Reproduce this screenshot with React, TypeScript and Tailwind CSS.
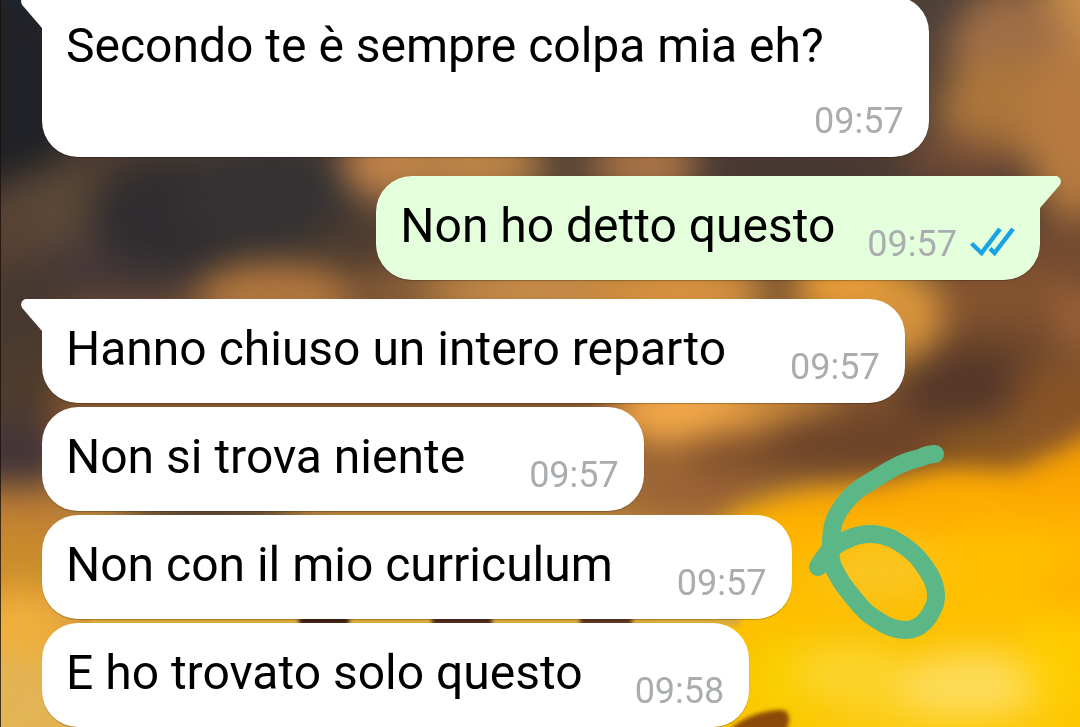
import clsx from "clsx";

type Message = {
  text: string;
  time: string;
  own?: boolean;
  tail?: boolean;
  stacked?: boolean;
  textGap: string;
};

const groups: Message[][] = [
  [
    {
      text: "Secondo te è sempre colpa mia eh?",
      time: "09:57",
      tail: true,
      stacked: true,
      textGap: "pr-20",
    },
  ],
  [{ text: "Non ho detto questo", time: "09:57", own: true, tail: true, textGap: "pr-8" }],
  [
    { text: "Hanno chiuso un intero reparto", time: "09:57", tail: true, textGap: "pr-16" },
    { text: "Non si trova niente", time: "09:57", textGap: "pr-16" },
    { text: "Non con il mio curriculum", time: "09:57", textGap: "pr-16" },
    { text: "E ho trovato solo questo", time: "09:58", textGap: "pr-[52px]" },
  ],
];

/* cx, cy, rx, ry, colour, opacity */
type Blob = [number, number, number, number, string, number];

const softBlobs: Blob[] = [
  [0, 10, 60, 60, "#1d2a36", 1],
  [0, 90, 80, 100, "#202126", 1],
  [60, 212, 70, 45, "#5a4736", 1],
  [0, 245, 30, 50, "#5a4134", 0.8],
  [120, 270, 90, 30, "#41363a", 0.9],
  [180, 215, 90, 55, "#2f2d2f", 1],
  [270, 200, 90, 55, "#343233", 1],
  [350, 240, 40, 30, "#4b3b30", 0.8],
  [385, 165, 44, 36, "#bd8049", 1],
  [470, 166, 80, 26, "#c98d49", 1],
  [580, 166, 40, 18, "#5f4938", 1],
  [650, 166, 60, 22, "#bd7f4b", 1],
  [790, 168, 100, 24, "#483833", 1],
  [275, 296, 80, 30, "#b3783f", 1],
  [410, 290, 50, 20, "#8a6038", 1],
  [560, 290, 140, 26, "#d0924a", 1],
  [680, 292, 90, 30, "#dd9640", 1],
  [850, 288, 60, 34, "#e89c38", 1],
  [935, 20, 40, 80, "#4c3f38", 1],
  [935, 90, 26, 60, "#594437", 0.9],
  [1080, 25, 50, 60, "#c68e4a", 1],
  [1010, 50, 60, 60, "#a06e46", 1],
  [1000, 110, 60, 50, "#ac763b", 1],
  [960, 158, 60, 26, "#7d5038", 0.7],
  [1075, 130, 50, 90, "#b67a3f", 1],
  [1075, 255, 55, 36, "#744b31", 1],
  [1000, 305, 90, 40, "#85542f", 1],
  [912, 325, 30, 55, "#d8953b", 1],
  [1010, 350, 80, 30, "#70482c", 0.9],
  [965, 385, 70, 38, "#553829", 1],
  [1080, 320, 26, 36, "#a5663a", 0.7],
  [1060, 400, 50, 36, "#885326", 0.9],
  [690, 412, 80, 34, "#f4a848", 1],
  [790, 412, 60, 24, "#e29b40", 1],
  [760, 452, 80, 22, "#7c4d2a", 1],
  [860, 440, 100, 34, "#6d4429", 1],
  [690, 492, 70, 24, "#9b6236", 1],
  [985, 452, 60, 28, "#8c591f", 0.8],
  [20, 330, 50, 70, "#45382f", 1],
  [15, 385, 45, 50, "#4d3b2d", 1],
  [15, 455, 50, 34, "#42343a", 1],
  [10, 510, 60, 24, "#bd7c34", 1],
  [15, 565, 55, 40, "#ca8b2b", 1],
  [20, 630, 50, 44, "#f0ae3c", 1],
  [15, 705, 70, 50, "#e2b455", 1],
  [210, 513, 90, 16, "#332a2e", 1],
];

const glowBlobs: Blob[] = [
  [1000, 575, 90, 50, "#ffc000", 0.7],
  [880, 570, 60, 30, "#fac726", 0.9],
  [1070, 590, 30, 20, "#ffaa00", 0.7],
  [960, 500, 60, 18, "#ffad00", 0.8],
  [785, 680, 34, 40, "#f8d000", 0.9],
  [850, 672, 55, 28, "#fad530", 1],
  [910, 705, 80, 24, "#fbd022", 0.9],
  [975, 685, 80, 34, "#fddb58", 1],
  [1060, 660, 40, 50, "#ffce00", 0.8],
];

function Wallpaper() {
  return (
    <svg
      aria-hidden="true"
      className="absolute inset-0 h-full w-full"
      viewBox="0 0 1080 727"
      preserveAspectRatio="none"
    >
      <defs>
        <linearGradient id="sky" x1="0" y1="0" x2="0" y2="1">
          <stop offset="0" stopColor="#5a4535" />
          <stop offset="0.25" stopColor="#4a3a31" />
          <stop offset="0.5" stopColor="#81542e" />
          <stop offset="0.62" stopColor="#8b5a30" />
          <stop offset="0.72" stopColor="#b9853c" />
          <stop offset="1" stopColor="#e9b044" />
        </linearGradient>
        <linearGradient id="field" x1="0" y1="0" x2="0" y2="1">
          <stop offset="0" stopColor="#ee9404" />
          <stop offset="0.2" stopColor="#fca600" />
          <stop offset="0.35" stopColor="#ffb700" />
          <stop offset="0.6" stopColor="#fdc200" />
          <stop offset="1" stopColor="#fcca06" />
        </linearGradient>
        <filter
          id="soft"
          x="-20%"
          y="-20%"
          width="140%"
          height="140%"
          colorInterpolationFilters="sRGB"
        >
          <feGaussianBlur stdDeviation="17" />
        </filter>
        <filter
          id="edge"
          x="-20%"
          y="-20%"
          width="140%"
          height="140%"
          colorInterpolationFilters="sRGB"
        >
          <feGaussianBlur stdDeviation="13" />
        </filter>
        <filter
          id="petal"
          x="-20%"
          y="-60%"
          width="140%"
          height="220%"
          colorInterpolationFilters="sRGB"
        >
          <feGaussianBlur stdDeviation="2" />
        </filter>
      </defs>
      <rect width="1080" height="727" fill="url(#sky)" />
      <g filter="url(#soft)">
        {softBlobs.map(([cx, cy, rx, ry, fill, opacity], i) => (
          <ellipse key={i} cx={cx} cy={cy} rx={rx} ry={ry} fill={fill} opacity={opacity} />
        ))}
      </g>
      <path
        d="M690 560 L735 512 L800 492 L880 484 L950 472 L1010 474 L1060 450 L1120 415 L1120 790 L640 790 Z"
        fill="url(#field)"
        filter="url(#edge)"
      />
      <g filter="url(#soft)">
        {glowBlobs.map(([cx, cy, rx, ry, fill, opacity], i) => (
          <ellipse key={i} cx={cx} cy={cy} rx={rx} ry={ry} fill={fill} opacity={opacity} />
        ))}
      </g>
      <g filter="url(#petal)">
        <rect x="90" y="617" width="650" height="9" fill="#d9a93c" />
        <rect x="299" y="616" width="50" height="10" fill="#3a1f14" />
        <rect x="432" y="616" width="60" height="10" fill="#4a2a1c" />
        <rect x="580" y="616" width="52" height="10" fill="#5a3420" />
        <path d="M725 735 C738 718 765 709 783 710 C792 713 790 724 784 735 Z" fill="#8c4a08" />
      </g>
      <rect width="1" height="727" fill="#1a120c" opacity="0.8" />
    </svg>
  );
}

function Tail({ own }: { own?: boolean }) {
  return (
    <svg
      aria-hidden="true"
      viewBox="0 0 22 32"
      className={clsx(
        "absolute top-0 h-8 w-[22px]",
        own ? "-right-[21px] -scale-x-100 text-[#e4ffdb]" : "-left-[21px] text-white",
      )}
    >
      <path d="M22 0 H5.500 C1 0 -1.400 5 1.200 9 L21 32 H22 Z" fill="currentColor" />
    </svg>
  );
}

function ReadTicks() {
  return (
    <svg
      role="img"
      aria-label="Letto"
      viewBox="0 0 46 32"
      className="h-8 w-[46px]"
      fill="none"
      stroke="#18a4e4"
      strokeWidth="4.4"
    >
      <path d="M2.500 15.500 L12.500 25 L31 0.800" />
      <path d="M21 20.500 L25.500 25 L44 0.800" />
    </svg>
  );
}

function Bubble({ message }: { message: Message }) {
  const { text, time, own, tail, stacked, textGap } = message;
  return (
    <li
      className={clsx(
        "relative flex w-fit rounded-[36px] pt-[22px] pr-[25px] pb-[15px] pl-6 shadow-[0_1px_1px_rgba(0,0,0,0.25)]",
        own ? "self-end bg-[#e4ffdb]" : "self-start bg-white",
        tail && (own ? "rounded-tr-none" : "rounded-tl-none"),
        stacked ? "flex-col" : "items-end",
      )}
    >
      {tail && <Tail own={own} />}
      <p
        className={clsx(
          "text-[48px] leading-[56px] text-black",
          textGap,
          stacked ? "mb-[26px]" : "mb-[11px]",
        )}
      >
        {text}
      </p>
      <div className="flex items-center gap-3 self-end">
        <time className="text-[36px] leading-[42px] text-[#a9adb0]">{time}</time>
        {own && <ReadTicks />}
      </div>
    </li>
  );
}

function HandDrawnSix() {
  return (
    <svg
      role="img"
      aria-label="6"
      viewBox="800 436 160 212"
      className="pointer-events-none absolute top-[436px] left-[800px] h-[212px] w-40"
      fill="none"
      stroke="#5cb786"
      strokeWidth="18"
      strokeLinecap="round"
      strokeLinejoin="round"
    >
      <path d="M935 454 C928 454 924 456 920 458 C904 461 894 467 870 482 C857 489 851 495 844 504 C833 518 831 529 831 545 C829 562 833 568 842 583 C850 594 858 604 867 613 C880 622 890 630 907 630 C922 629 930 617 935 604 C939 588 931 575 922 563 C914 551 902 544 893 539 C877 532 861 533 848 539 C830 547 827 552 818 567" />
    </svg>
  );
}

export default function App() {
  return (
    <main className="relative min-h-screen overflow-hidden bg-[#6b4a30] font-['Roboto',sans-serif]">
      <Wallpaper />
      <div className="relative -mt-1 flex flex-col gap-[19px] pr-10 pl-[42px]">
        {groups.map((group, i) => (
          <ul key={i} className="flex flex-col gap-1">
            {group.map((message) => (
              <Bubble key={message.text} message={message} />
            ))}
          </ul>
        ))}
      </div>
      <HandDrawnSix />
    </main>
  );
}
